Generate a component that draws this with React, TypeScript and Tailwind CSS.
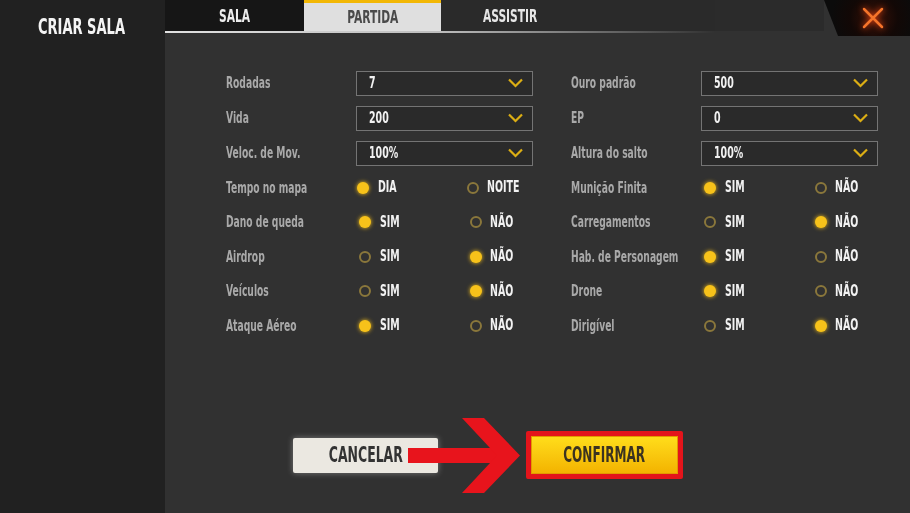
import React from 'react';

type Opt = { label: string; value: string };
type Radio = { label: string; a: string; b: string; pick: 'a' | 'b' };

const dropLeft: Opt[] = [
  { label: 'Rodadas', value: '7' },
  { label: 'Vida', value: '200' },
  { label: 'Veloc. de Mov.', value: '100%' },
];
const dropRight: Opt[] = [
  { label: 'Ouro padrão', value: '500' },
  { label: 'EP', value: '0' },
  { label: 'Altura do salto', value: '100%' },
];
const radioLeft: Radio[] = [
  { label: 'Tempo no mapa', a: 'DIA', b: 'NOITE', pick: 'a' },
  { label: 'Dano de queda', a: 'SIM', b: 'NÃO', pick: 'a' },
  { label: 'Airdrop', a: 'SIM', b: 'NÃO', pick: 'b' },
  { label: 'Veículos', a: 'SIM', b: 'NÃO', pick: 'b' },
  { label: 'Ataque Aéreo', a: 'SIM', b: 'NÃO', pick: 'a' },
];
const radioRight: Radio[] = [
  { label: 'Munição Finita', a: 'SIM', b: 'NÃO', pick: 'a' },
  { label: 'Carregamentos', a: 'SIM', b: 'NÃO', pick: 'b' },
  { label: 'Hab. de Personagem', a: 'SIM', b: 'NÃO', pick: 'a' },
  { label: 'Drone', a: 'SIM', b: 'NÃO', pick: 'a' },
  { label: 'Dirigível', a: 'SIM', b: 'NÃO', pick: 'b' },
];

// the game font is very narrow, so text gets squeezed horizontally
const Label = ({ children }: { children: React.ReactNode }) => (
  <span className="inline-block origin-left scale-x-[0.68] text-[15px] leading-none font-bold text-[#a9a9a9] whitespace-nowrap">
    {children}
  </span>
);

const Value = ({ children }: { children: React.ReactNode }) => (
  <span className="inline-block origin-left scale-x-[0.7] text-[15px] leading-none font-bold text-[#f2f2f2] whitespace-nowrap">
    {children}
  </span>
);

const Dot = ({ on }: { on: boolean }) =>
  on ? (
    <span className="w-[12px] h-[12px] rounded-full bg-[#f7c21a] shadow-[0_0_4px_#f7c21a] shrink-0" />
  ) : (
    <span className="w-[12px] h-[12px] rounded-full border-2 border-[#8a773b] shrink-0" />
  );

const Dropdown = ({ o }: { o: Opt }) => (
  <div className="h-[35px] flex items-center">
    <div className="w-[130px]">
      <Label>{o.label}</Label>
    </div>
    <div className="w-[177px] h-[25px] border border-[#747474] bg-[#2a2a2a] flex items-center justify-between pl-[12px] pr-[9px]">
      <Value>{o.value}</Value>
      <svg width="15" height="10" viewBox="0 0 15 10">
        <path d="M1 1.5 L7.5 8 L14 1.5" fill="none" stroke="#dcae14" strokeWidth="2.2" />
      </svg>
    </div>
  </div>
);

const RadioRow = ({ r }: { r: Radio }) => (
  <div className="h-[34.5px] flex items-center">
    <div className="w-[133px]">
      <Label>{r.label}</Label>
    </div>
    <div className="w-[111px] flex items-center gap-[9px]">
      <Dot on={r.pick === 'a'} />
      <Value>{r.a}</Value>
    </div>
    <div className="flex items-center gap-[8px]">
      <Dot on={r.pick === 'b'} />
      <Value>{r.b}</Value>
    </div>
  </div>
);

export default function App() {
  return (
    <div
      className="relative w-[910px] h-[513px] flex bg-[#313131] overflow-hidden"
      style={{ fontFamily: '"DejaVu Sans Condensed", "Liberation Sans Narrow", sans-serif' }}
    >
      {/* Sidebar */}
      <aside className="w-[165px] h-full bg-[#212121] pt-[17px] pl-[38px] shrink-0">
        <span className="inline-block origin-left scale-x-[0.69] text-[21px] leading-none font-bold text-[#f4f4f4] whitespace-nowrap">
          CRIAR SALA
        </span>
      </aside>

      <main className="flex-1 flex flex-col">
        {/* Header */}
        <div className="h-[36px] flex items-start">
          <div className="w-[550px] flex flex-col">
            <div className="h-[31px] flex bg-[#2a2a2a]">
              <div className="w-[139px] bg-[#161616] flex items-center justify-center">
                <span className="inline-block scale-x-[0.66] text-[18px] leading-none font-bold text-[#ececec]">SALA</span>
              </div>
              <div className="w-[137px] bg-[#dfdfdf] border-t-[3px] border-[#f2b705] flex items-center justify-center">
                <span className="inline-block scale-x-[0.66] text-[18px] leading-none font-bold text-[#4a4a4a]">PARTIDA</span>
              </div>
              <div className="w-[138px] flex items-center justify-center">
                <span className="inline-block scale-x-[0.66] text-[18px] leading-none font-bold text-[#e6e6e6]">ASSISTIR</span>
              </div>
            </div>
            <div className="h-[2px] bg-gradient-to-r from-[#e2e2e2] via-[#bdbdbd] to-transparent" />
          </div>
          <div className="flex-1 h-[31px] bg-[#2b2b2b]" />
          <div className="w-[86px] h-[36px] bg-[radial-gradient(circle_at_58%_50%,#3a1208_0%,#120806_45%,#0b0b0b_80%)] [clip-path:polygon(0_0,100%_0,100%_100%,14px_100%)] flex items-center justify-center pl-[12px]">
            <svg width="22" height="22" viewBox="0 0 22 22" className="drop-shadow-[0_0_3px_#ff4a10]">
              <path d="M2 2 L20 20 M20 2 L2 20" stroke="#f4742a" strokeWidth="2.5" strokeLinecap="round" />
            </svg>
          </div>
        </div>

        {/* Settings grid */}
        <div className="pt-[29.5px] pl-[61px] flex gap-[38px]">
          <div className="w-[307px] flex flex-col">
            {dropLeft.map((o) => (
              <Dropdown key={o.label} o={o} />
            ))}
            {radioLeft.map((r) => (
              <RadioRow key={r.label} r={r} />
            ))}
          </div>
          <div className="w-[307px] flex flex-col">
            {dropRight.map((o) => (
              <Dropdown key={o.label} o={o} />
            ))}
            {radioRight.map((r) => (
              <RadioRow key={r.label} r={r} />
            ))}
          </div>
        </div>

        {/* Buttons */}
        <div className="mt-[88px] pl-[128px] flex items-center">
          <button className="w-[145px] h-[35px] bg-[#ebe8e1] rounded-[2px] shadow-[0_0_6px_rgba(255,255,255,0.35)] flex items-center justify-center">
            <span className="inline-block scale-x-[0.63] text-[22px] leading-none font-bold text-[#333]">CANCELAR</span>
          </button>
          <div className="ml-[88px] border-[5px] border-[#e3141b] rounded-[2px]">
            <button className="w-[147px] h-[38px] bg-gradient-to-b from-[#ffdd1a] to-[#f3b300] border border-[#e39a00] flex items-center justify-center">
              <span className="inline-block scale-x-[0.61] text-[22px] leading-none font-bold text-[#3b3320]">CONFIRMAR</span>
            </button>
          </div>
        </div>
      </main>

      {/* Red arrow overlay */}
      <svg className="absolute left-[400px] top-[415px]" width="125" height="82" viewBox="0 0 125 82">
        <rect x="8" y="33" width="98" height="15" fill="#e8141c" />
        <polygon points="62,3 84,3 120,40.5 84,78 62,78 97,40.5" fill="#e8141c" />
      </svg>
    </div>
  );
}
